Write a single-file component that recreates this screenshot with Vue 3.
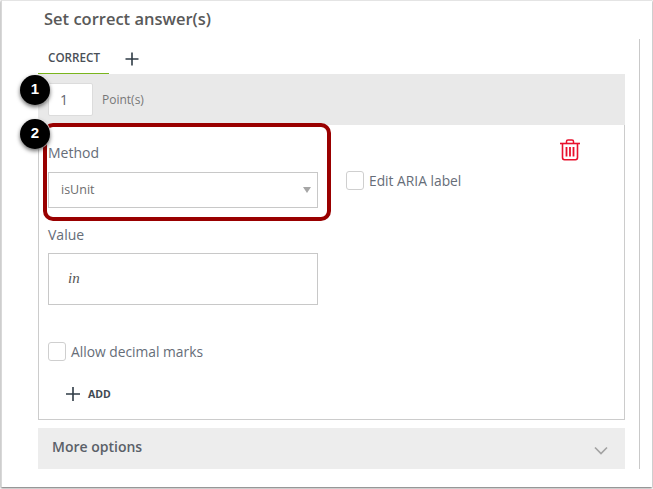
<script setup>
const tabs = ['CORRECT']
</script>

<template>
  <div class="page">
    <div class="window">
      <h3 class="title">Set correct answer(s)</h3>
      <div class="scroll">
        <div class="tabs">
          <div v-for="t in tabs" :key="t" class="tab">{{ t }}</div>
          <svg class="tab-add" width="16" height="16" viewBox="0 0 16 16">
            <path d="M8 1.500v13M1.500 8h13" stroke="#2f3b45" stroke-width="1.600" fill="none" />
          </svg>
        </div>
        <div class="points">
          <div class="points-input">1</div>
          <span class="points-label">Point(s)</span>
        </div>
        <div class="panel">
          <div class="top-row">
            <div class="method">
              <label class="field-label">Method</label>
              <div class="select">
                <span>isUnit</span>
                <i class="caret" />
              </div>
            </div>
            <label class="check aria">
              <span class="box" />
              <span>Edit ARIA label</span>
            </label>
            <svg class="trash" width="20" height="22" viewBox="0 0 20 22" fill="none" stroke="#e8112d">
              <path d="M0 4.500h20" stroke-width="1.600" />
              <path d="M6.500 4V2.400C6.500 1.400 7.200 1 8 1h4c.8 0 1.500.4 1.500 1.400V4" stroke-width="1.500" />
              <path d="M2.500 5v13.500c0 1.300.8 2.200 2 2.200h11c1.200 0 2-.9 2-2.200V5" stroke-width="1.600" />
              <path d="M6.500 8v9.500M10 8v9.500M13.500 8v9.500" stroke-width="1.800" />
            </svg>
          </div>
          <label class="field-label value-label">Value</label>
          <div class="value-box"><em>in</em></div>
          <label class="check decimal">
            <span class="box" />
            <span>Allow decimal marks</span>
          </label>
          <div class="add">
            <svg width="14" height="14" viewBox="0 0 14 14">
              <path d="M7 0v14M0 7h14" stroke="#2f3b45" stroke-width="1.600" fill="none" />
            </svg>
            <span>ADD</span>
          </div>
        </div>
        <div class="more">
          <span>More options</span>
          <svg width="14" height="9" viewBox="0 0 14 9">
            <path d="M1 1.500l6 6 6-6" stroke="#a3a3a3" stroke-width="1.700" fill="none" />
          </svg>
        </div>
      </div>
    </div>

    <!-- annotations over the screenshot -->
    <div class="highlight" />
    <div class="badge badge-1">1</div>
    <div class="badge badge-2">2</div>
  </div>
</template>

<style scoped>
.page {
  position: relative;
  width: 653px;
  height: 489px;
  background: #fff;
  overflow: hidden;
  font-family: 'Open Sans', 'Noto Sans', sans-serif;
  color: #5f6470;
}
.window {
  box-sizing: border-box;
  width: 651px;
  height: 487px;
  margin-left: 1px;
  padding-left: 36px;
  background: #fff;
  border-left: 1px solid #d8d8d8;
  border-top: 1px solid #e4e4e4;
  box-shadow: 0 1px 2px rgba(0, 0, 0, 0.6);
}
.title {
  margin: 0;
  padding-left: 6px;
  height: 38px;
  line-height: 36px;
  font-size: 16.500px;
  font-weight: 600;
  color: #595959;
}
.scroll {
  box-sizing: border-box;
  width: 602px;
  height: 430px;
  padding-right: 14px;
  border-right: 1px solid #c9c9c9;
}
.tabs {
  display: flex;
  align-items: center;
  height: 35px;
}
.tab {
  box-sizing: border-box;
  width: 71px;
  height: 35px;
  padding: 10px 0 0 10px;
  line-height: 16px;
  font-size: 11.700px;
  font-weight: 600;
  color: #4a4f57;
  border-bottom: 1px solid #7ab51d;
}
.tab-add {
  margin: 5px 0 0 15px;
}
.points {
  display: flex;
  align-items: center;
  height: 51px;
  padding-left: 10px;
  background: #e9e9e9;
}
.points-input {
  box-sizing: border-box;
  width: 45px;
  height: 33px;
  padding-left: 11px;
  line-height: 31px;
  font-size: 14px;
  color: #5f6470;
  background: #fff;
  border: 1px solid #dcdcdc;
  border-radius: 2px;
}
.points-label {
  margin-left: 9px;
  font-size: 12px;
  color: #777;
}
.panel {
  box-sizing: border-box;
  height: 295px;
  padding: 0 0 0 9px;
  border: 1px solid #ccc;
  border-top: 0;
}
.top-row {
  display: flex;
  height: 83px;
}
.method {
  width: 271px;
}
.field-label {
  display: block;
  font-size: 14px;
  line-height: 20px;
  color: #666d78;
}
.method .field-label {
  margin-top: 18px;
}
.select {
  box-sizing: border-box;
  display: flex;
  align-items: center;
  justify-content: space-between;
  width: 270px;
  height: 36px;
  margin-top: 9px;
  padding: 0 6px 2px 12px;
  font-size: 12.500px;
  color: #6d6d6d;
  background: #fff;
  border: 1px solid #c8c8c8;
}
.caret {
  width: 0;
  height: 0;
  margin-top: 2px;
  border-left: 4px solid transparent;
  border-right: 4px solid transparent;
  border-top: 6px solid #a6a6a6;
}
.check {
  display: flex;
  align-items: center;
  gap: 5px;
  font-size: 13.800px;
  color: #666d78;
}
.box {
  box-sizing: border-box;
  width: 18px;
  height: 19px;
  background: #fff;
  border: 1px solid #cfcfcf;
  border-radius: 3px;
}
.aria {
  align-self: flex-start;
  margin: 46px 0 0 27px;
}
.trash {
  margin: 14px 0 0 99px;
}
.value-label {
  margin-top: 17px;
}
.value-box {
  box-sizing: border-box;
  width: 270px;
  height: 52px;
  margin-top: 8px;
  padding: 14px 0 0 19px;
  line-height: 20px;
  font-family: 'Liberation Serif', serif;
  font-size: 15px;
  color: #555;
  border: 1px solid #c8c8c8;
}
.decimal {
  margin-top: 36px;
  height: 20px;
}
.add {
  display: flex;
  align-items: center;
  gap: 8px;
  margin: 26px 0 0 18px;
  font-size: 10.500px;
  font-weight: 700;
  color: #3f4a52;
}
.more {
  display: flex;
  align-items: center;
  justify-content: space-between;
  height: 41px;
  margin-top: 8px;
  padding: 0 17px 4px 14px;
  box-sizing: border-box;
  font-size: 14px;
  font-weight: 600;
  color: #5a6068;
  background: #ededed;
}
.more svg {
  margin-top: 8px;
}
.highlight {
  position: absolute;
  left: 43px;
  top: 123px;
  box-sizing: border-box;
  width: 288px;
  height: 98px;
  border: 4px solid #990000;
  border-radius: 10px;
}
.badge {
  position: absolute;
  left: 20px;
  box-sizing: border-box;
  width: 30px;
  height: 30px;
  line-height: 28px;
  text-align: center;
  font-family: 'Liberation Sans', sans-serif;
  font-size: 15px;
  font-weight: 700;
  color: #fff;
  background: #000;
  border-radius: 50%;
  box-shadow: 0 2px 4px rgba(0, 0, 0, 0.6), 0 0 0 1px rgba(255, 255, 255, 0.8);
}
.badge-1 {
  top: 75px;
}
.badge-2 {
  top: 119px;
}
</style>
